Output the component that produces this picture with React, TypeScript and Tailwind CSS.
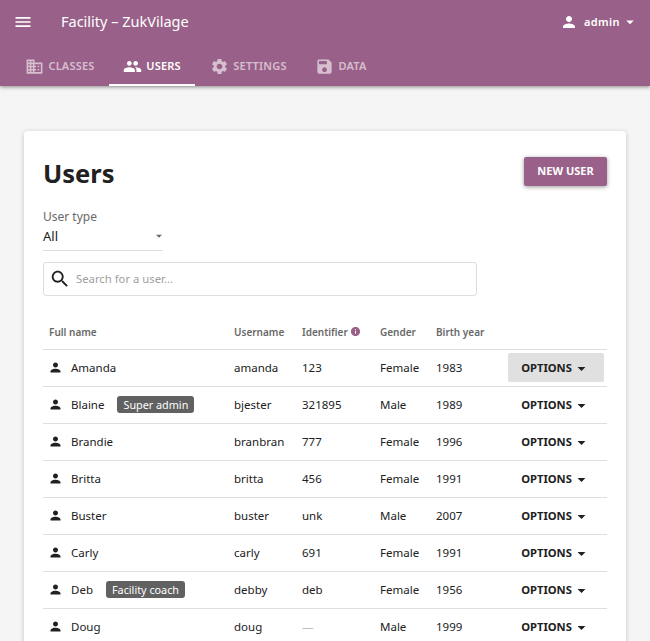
const ICONS = {
  menu: 'M3 18h18v-2H3v2zm0-5h18v-2H3v2zm0-7v2h18V6H3z',
  person: 'M12 12c2.21 0 4-1.79 4-4s-1.79-4-4-4-4 1.79-4 4 1.79 4 4 4zm0 2c-2.67 0-8 1.34-8 4v2h16v-2c0-2.66-5.33-4-8-4z',
  domain: 'M12 7V3H2v18h20V7H12zM6 19H4v-2h2v2zm0-4H4v-2h2v2zm0-4H4V9h2v2zm0-4H4V5h2v2zm4 12H8v-2h2v2zm0-4H8v-2h2v2zm0-4H8V9h2v2zm0-4H8V5h2v2zm10 12h-8v-2h2v-2h-2v-2h2v-2h-2V9h8v10zm-2-8h-2v2h2v-2zm0 4h-2v2h2v-2z',
  people: 'M16 11c1.66 0 2.99-1.34 2.99-3S17.66 5 16 5c-1.66 0-3 1.34-3 3s1.34 3 3 3zm-8 0c1.66 0 2.99-1.34 2.99-3S9.66 5 8 5C6.34 5 5 6.34 5 8s1.34 3 3 3zm0 2c-2.33 0-7 1.17-7 3.5V19h14v-2.5c0-2.33-4.67-3.5-7-3.5zm8 0c-.29 0-.62.02-.97.05 1.16.84 1.97 1.97 1.97 3.45V19h6v-2.5c0-2.33-4.67-3.5-7-3.5z',
  settings: 'M19.14 12.94c.04-.3.06-.61.06-.94 0-.32-.02-.64-.07-.94l2.03-1.58c.18-.14.23-.41.12-.61l-1.92-3.32c-.12-.22-.37-.29-.59-.22l-2.39.96c-.5-.38-1.03-.7-1.62-.94l-.36-2.54c-.04-.24-.24-.41-.48-.41h-3.84c-.24 0-.43.17-.47.41l-.36 2.54c-.59.24-1.13.57-1.62.94l-2.39-.96c-.22-.08-.47 0-.59.22L2.74 8.87c-.12.21-.08.47.12.61l2.03 1.58c-.05.3-.09.63-.09.94s.02.64.07.94l-2.03 1.58c-.18.14-.23.41-.12.61l1.92 3.32c.12.22.37.29.59.22l2.39-.96c.5.38 1.03.7 1.62.94l.36 2.54c.05.24.24.41.48.41h3.84c.24 0 .44-.17.47-.41l.36-2.54c.59-.24 1.13-.56 1.62-.94l2.39.96c.22.08.47 0 .59-.22l1.92-3.32c.12-.22.07-.47-.12-.61l-2.01-1.58zM12 15.6c-1.98 0-3.6-1.62-3.6-3.6s1.62-3.6 3.6-3.6 3.6 1.62 3.6 3.6-1.62 3.6-3.6 3.6z',
  save: 'M17 3H5c-1.11 0-2 .9-2 2v14c0 1.1.89 2 2 2h14c1.1 0 2-.9 2-2V7l-4-4zm-5 16c-1.66 0-3-1.34-3-3s1.34-3 3-3 3 1.34 3 3-1.34 3-3 3zm3-10H5V5h10v4z',
  search: 'M15.5 14h-.79l-.28-.27C15.41 12.59 16 11.11 16 9.5 16 5.91 13.09 3 9.5 3S3 5.91 3 9.5 5.91 16 9.5 16c1.61 0 3.09-.59 4.23-1.57l.27.28v.79l5 4.99L20.49 19l-4.99-5zm-6 0C7.01 14 5 11.99 5 9.5S7.01 5 9.5 5 14 7.01 14 9.5 11.99 14 9.5 14z',
  info: 'M12 2C6.48 2 2 6.48 2 12s4.48 10 10 10 10-4.48 10-10S17.52 2 12 2zm1 15h-2v-6h2v6zm0-8h-2V7h2v2z',
  arrow: 'M7 10l5 5 5-5z',
}

function Icon({ name, className }: { name: keyof typeof ICONS; className: string }) {
  return (
    <svg viewBox="0 0 24 24" fill="currentColor" className={className} aria-hidden>
      <path d={ICONS[name]} />
    </svg>
  )
}

const tabs = [
  { label: 'CLASSES', icon: 'domain' as const, width: 'w-[94px] pr-[4px]' },
  { label: 'USERS', icon: 'people' as const, width: 'w-[86px]', active: true },
  { label: 'SETTINGS', icon: 'settings' as const, width: 'w-[107px]' },
  { label: 'DATA', icon: 'save' as const, width: 'w-[78px]' },
]

const users = [
  { name: 'Amanda', username: 'amanda', id: '123', gender: 'Female', year: '1983', hover: true },
  { name: 'Blaine', badge: 'Super admin', username: 'bjester', id: '321895', gender: 'Male', year: '1989' },
  { name: 'Brandie', username: 'branbran', id: '777', gender: 'Female', year: '1996' },
  { name: 'Britta', username: 'britta', id: '456', gender: 'Female', year: '1991' },
  { name: 'Buster', username: 'buster', id: 'unk', gender: 'Male', year: '2007' },
  { name: 'Carly', username: 'carly', id: '691', gender: 'Female', year: '1991' },
  { name: 'Deb', badge: 'Facility coach', username: 'debby', id: 'deb', gender: 'Female', year: '1956' },
  { name: 'Doug', username: 'doug', id: '—', gender: 'Male', year: '1999' },
]

export default function App() {
  return (
    <div className="h-[641px] overflow-hidden bg-[#f5f5f5] font-['Noto_Sans',sans-serif] text-[#212121]">
      <header className="h-[86px] bg-[#996189] text-white shadow-[0_1px_4px_rgba(0,0,0,0.45)]">
        <div className="flex h-[44px] items-center">
          <Icon name="menu" className="ml-[13px] h-5 w-5" />
          <span className="ml-[28px] text-[14.5px]">Facility – ZukVilage</span>
          <div className="ml-auto mr-[11px] flex items-center">
            <Icon name="person" className="h-[18px] w-[18px]" />
            <span className="ml-[6px] text-[11px] font-semibold tracking-[0.4px]">admin</span>
            <Icon name="arrow" className="ml-[1px] h-[18px] w-[18px]" />
          </div>
        </div>
        <nav className="ml-[15px] flex h-[42px]">
          {tabs.map((tab) => (
            <div
              key={tab.label}
              className={`flex h-full items-center justify-center gap-[4px] border-b-2 pt-[4px] text-[11px] font-semibold tracking-[0.2px] ${tab.width} ${tab.active ? 'border-white text-white' : 'border-transparent text-white/60'}`}
            >
              <Icon name={tab.icon} className="h-[19px] w-[19px]" />
              <span>{tab.label}</span>
            </div>
          ))}
        </nav>
      </header>

      <main className="mx-6 mt-[45px] rounded bg-white px-[19px] pt-[26px] shadow-[0_1px_5px_rgba(0,0,0,0.2)]">
        <div className="flex h-[33px] items-start justify-between">
          <h1 className="-mt-px text-[25.5px] leading-[34px] font-bold">Users</h1>
          <button className="h-[29px] w-[83px] rounded-[2px] bg-[#996189] text-[11px] font-bold text-white shadow-[0_1px_4px_rgba(0,0,0,0.4)]">
            NEW USER
          </button>
        </div>

        <div className="mt-[18px] w-[120px] border-b border-[#dedede] pb-[4px]">
          <div className="text-[12px] leading-[18px] text-[#686868]">User type</div>
          <div className="flex items-center justify-between text-[13px] leading-[20px]">
            <span>All</span>
            <Icon name="arrow" className="-mr-[3px] h-[14px] w-[14px] text-[#686868]" />
          </div>
        </div>

        <div className="mt-[11px] flex h-[34px] w-[434px] items-center rounded-[3px] border border-[#dedede]">
          <Icon name="search" className="ml-[5px] h-[22px] w-[22px]" />
          <span className="ml-[5px] text-[11.3px] text-[#a0a0a0]">Search for a user...</span>
        </div>

        <table className="mt-[13px] w-[564px] table-fixed border-collapse text-[11.5px]">
          <colgroup>
            <col className="w-[185px]" />
            <col className="w-[68px]" />
            <col className="w-[78px]" />
            <col className="w-[56px]" />
            <col className="w-[78px]" />
            <col className="w-[99px]" />
          </colgroup>
          <thead>
            <tr className="h-[40px] border-b border-[#dedede] text-left text-[10px] text-[#686868]">
              <th className="pt-[8px] pl-[6px] font-semibold">Full name</th>
              <th className="pt-[8px] pl-[6px] font-semibold">Username</th>
              <th className="pt-[8px] pl-[6px] font-semibold">
                <span className="flex items-center">
                  Identifier
                  <Icon name="info" className="mb-[3px] ml-[2px] h-[11px] w-[11px] text-[#996189]" />
                </span>
              </th>
              <th className="pt-[8px] pl-[6px] font-semibold">Gender</th>
              <th className="pt-[8px] pl-[6px] font-semibold">Birth year</th>
              <th />
            </tr>
          </thead>
          <tbody>
            {users.map((user) => (
              <tr key={user.name} className="h-[37px] border-b border-[#dedede]">
                <td className="pl-[6px]">
                  <div className="flex items-center">
                    <Icon name="person" className="-ml-px h-[15px] w-[15px]" />
                    <span className="ml-[8px]">{user.name}</span>
                    {user.badge && (
                      <span className="ml-[13px] rounded-[3px] bg-[#616161] px-[6px] text-[10.8px] leading-[17px] text-white">
                        {user.badge}
                      </span>
                    )}
                  </div>
                </td>
                <td className="pl-[6px]">{user.username}</td>
                <td className={`pl-[6px] ${user.id === '—' ? 'text-[#bdbdbd]' : ''}`}>{user.id}</td>
                <td className="pl-[6px]">{user.gender}</td>
                <td className="pl-[6px]">{user.year}</td>
                <td>
                  <div
                    className={`flex h-[29px] w-[96px] items-center justify-center rounded-[2px] pt-[2px] text-[11.2px] font-bold ${user.hover ? 'bg-[#e0e0e0]' : ''}`}
                  >
                    OPTIONS
                    <Icon name="arrow" className="h-[19px] w-[19px]" />
                  </div>
                </td>
              </tr>
            ))}
          </tbody>
        </table>
      </main>
    </div>
  )
}
